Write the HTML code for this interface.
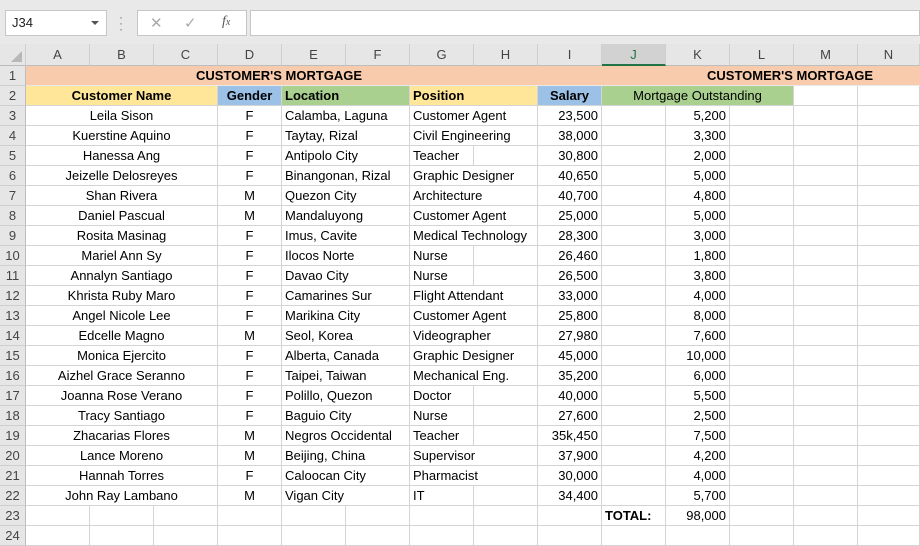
<!DOCTYPE html>
<html><head><meta charset="utf-8"><style>
*{box-sizing:border-box;margin:0;padding:0}
body{width:920px;height:546px;overflow:hidden;background:#fff;font-family:"Liberation Sans",Arial,sans-serif;font-size:13px;color:#000;position:relative}
.top{position:absolute;left:0;top:0;width:920px;height:44px;background:#e9e9e9}
.nb{position:absolute;left:5px;top:10px;width:102px;height:26px;background:#fff;border:1px solid #c6c6c6;font-size:13px;line-height:24px;padding-left:6px;color:#222}
.nb:after{content:"";position:absolute;right:7px;top:10px;border-left:4px solid transparent;border-right:4px solid transparent;border-top:4px solid #555}
.dots{position:absolute;left:119px;top:14px;color:#777;font-size:12px;line-height:6px;width:4px}
.fx{position:absolute;left:137px;top:10px;width:110px;height:26px;background:#fff;border:1px solid #c6c6c6;color:#aaa}
.fb{position:absolute;left:250px;top:10px;width:670px;height:26px;background:#fff;border:1px solid #c6c6c6}
.ch{position:absolute;top:44px;height:22px;background:#e6e6e6;border-right:1px solid #cfcfcf;border-bottom:1px solid #bdbdbd;text-align:center;line-height:22px;color:#444;font-size:13px}
.rh{position:absolute;left:0;width:26px;height:20px;background:#e6e6e6;border-right:1px solid #bdbdbd;border-bottom:1px solid #cfcfcf;text-align:center;line-height:20px;color:#444;font-size:13px}
.r{position:absolute;left:26px;width:894px;height:20px}
.c{position:absolute;top:0;height:20px;border-right:1px solid #d4d4d4;border-bottom:1px solid #d4d4d4;line-height:20px;padding:0 3px;white-space:nowrap;overflow:visible}
.A{left:0;width:192px;text-align:center}
.D{left:192px;width:64px;text-align:center}
.E{left:256px;width:128px}
.G{left:384px;width:128px}
.G1{left:384px;width:64px}
.H{left:448px;width:64px}
.I{left:512px;width:64px;text-align:right}
.J{left:576px;width:64px}
.K{left:640px;width:64px;text-align:right}
.L{left:704px;width:64px}
.M{left:768px;width:64px}
.N{left:832px;width:62px}
.b{font-weight:bold}
</style></head><body>
<div class="top">
<div class="nb">J34</div>
<div class="dots">·<br>·<br>·</div>
<div class="fx"><span style="position:absolute;left:12px;top:3px;font-size:15px">✕</span><span style="position:absolute;left:46px;top:3px;font-size:15px">✓</span><span style="position:absolute;left:84px;top:3px;font-style:italic;color:#555;font-family:'Liberation Serif',serif;font-size:14px">f<span style="font-size:10px">x</span></span></div>
<div class="fb"></div>
</div>
<div class="ch" style="left:0;width:26px;"><span style="position:absolute;right:3px;bottom:3px;border-left:11px solid transparent;border-bottom:11px solid #b8b8b8"></span></div>
<div class="ch" style="left:26px;width:64px">A</div>
<div class="ch" style="left:90px;width:64px">B</div>
<div class="ch" style="left:154px;width:64px">C</div>
<div class="ch" style="left:218px;width:64px">D</div>
<div class="ch" style="left:282px;width:64px">E</div>
<div class="ch" style="left:346px;width:64px">F</div>
<div class="ch" style="left:410px;width:64px">G</div>
<div class="ch" style="left:474px;width:64px">H</div>
<div class="ch" style="left:538px;width:64px">I</div>
<div class="ch" style="left:602px;width:64px;background:#d2d2d2;color:#217346;border-bottom:2px solid #217346">J</div>
<div class="ch" style="left:666px;width:64px">K</div>
<div class="ch" style="left:730px;width:64px">L</div>
<div class="ch" style="left:794px;width:64px">M</div>
<div class="ch" style="left:858px;width:62px">N</div>

<div class="rh" style="top:66px">1</div><div class="rh" style="top:86px">2</div><div class="rh" style="top:106px">3</div><div class="rh" style="top:126px">4</div><div class="rh" style="top:146px">5</div><div class="rh" style="top:166px">6</div><div class="rh" style="top:186px">7</div><div class="rh" style="top:206px">8</div><div class="rh" style="top:226px">9</div><div class="rh" style="top:246px">10</div><div class="rh" style="top:266px">11</div><div class="rh" style="top:286px">12</div><div class="rh" style="top:306px">13</div><div class="rh" style="top:326px">14</div><div class="rh" style="top:346px">15</div><div class="rh" style="top:366px">16</div><div class="rh" style="top:386px">17</div><div class="rh" style="top:406px">18</div><div class="rh" style="top:426px">19</div><div class="rh" style="top:446px">20</div><div class="rh" style="top:466px">21</div><div class="rh" style="top:486px">22</div><div class="rh" style="top:506px">23</div><div class="rh" style="top:526px">24</div>

<div class="r" style="top:66px"><div class="c b" style="left:0;width:894px;background:#f8cbad;border-right:none;border-bottom:1px solid #e9e9e9"><span style="position:absolute;left:170px">CUSTOMER'S MORTGAGE</span><span style="position:absolute;left:681px">CUSTOMER'S MORTGAGE</span></div></div>

<div class="r" style="top:86px">
<div class="c A b" style="background:#ffe699">Customer Name</div>
<div class="c D b" style="background:#9bc2e6">Gender</div>
<div class="c E b" style="background:#a9d08e">Location</div>
<div class="c G b" style="background:#ffe699">Position</div>
<div class="c I b" style="background:#9bc2e6;text-align:center">Salary</div>
<div class="c" style="left:576px;width:192px;background:#a9d08e;text-align:center">Mortgage Outstanding</div>
<div class="c M"></div><div class="c N"></div></div>

<div class="r" style="top:106px"><div class="c A">Leila Sison</div><div class="c D">F</div><div class="c E">Calamba, Laguna</div><div class="c G">Customer Agent</div><div class="c I">23,500</div><div class="c J"></div><div class="c K">5,200</div><div class="c L"></div><div class="c M"></div><div class="c N"></div></div>
<div class="r" style="top:126px"><div class="c A">Kuerstine Aquino</div><div class="c D">F</div><div class="c E">Taytay, Rizal</div><div class="c G">Civil Engineering</div><div class="c I">38,000</div><div class="c J"></div><div class="c K">3,300</div><div class="c L"></div><div class="c M"></div><div class="c N"></div></div>
<div class="r" style="top:146px"><div class="c A">Hanessa Ang</div><div class="c D">F</div><div class="c E">Antipolo City</div><div class="c G1">Teacher</div><div class="c H"></div><div class="c I">30,800</div><div class="c J"></div><div class="c K">2,000</div><div class="c L"></div><div class="c M"></div><div class="c N"></div></div>
<div class="r" style="top:166px"><div class="c A">Jeizelle Delosreyes</div><div class="c D">F</div><div class="c E">Binangonan, Rizal</div><div class="c G">Graphic Designer</div><div class="c I">40,650</div><div class="c J"></div><div class="c K">5,000</div><div class="c L"></div><div class="c M"></div><div class="c N"></div></div>
<div class="r" style="top:186px"><div class="c A">Shan Rivera</div><div class="c D">M</div><div class="c E">Quezon City</div><div class="c G">Architecture</div><div class="c I">40,700</div><div class="c J"></div><div class="c K">4,800</div><div class="c L"></div><div class="c M"></div><div class="c N"></div></div>
<div class="r" style="top:206px"><div class="c A">Daniel Pascual</div><div class="c D">M</div><div class="c E">Mandaluyong</div><div class="c G">Customer Agent</div><div class="c I">25,000</div><div class="c J"></div><div class="c K">5,000</div><div class="c L"></div><div class="c M"></div><div class="c N"></div></div>
<div class="r" style="top:226px"><div class="c A">Rosita Masinag</div><div class="c D">F</div><div class="c E">Imus, Cavite</div><div class="c G">Medical Technology</div><div class="c I">28,300</div><div class="c J"></div><div class="c K">3,000</div><div class="c L"></div><div class="c M"></div><div class="c N"></div></div>
<div class="r" style="top:246px"><div class="c A">Mariel Ann Sy</div><div class="c D">F</div><div class="c E">Ilocos Norte</div><div class="c G1">Nurse</div><div class="c H"></div><div class="c I">26,460</div><div class="c J"></div><div class="c K">1,800</div><div class="c L"></div><div class="c M"></div><div class="c N"></div></div>
<div class="r" style="top:266px"><div class="c A">Annalyn Santiago</div><div class="c D">F</div><div class="c E">Davao City</div><div class="c G1">Nurse</div><div class="c H"></div><div class="c I">26,500</div><div class="c J"></div><div class="c K">3,800</div><div class="c L"></div><div class="c M"></div><div class="c N"></div></div>
<div class="r" style="top:286px"><div class="c A">Khrista Ruby Maro</div><div class="c D">F</div><div class="c E">Camarines Sur</div><div class="c G">Flight Attendant</div><div class="c I">33,000</div><div class="c J"></div><div class="c K">4,000</div><div class="c L"></div><div class="c M"></div><div class="c N"></div></div>
<div class="r" style="top:306px"><div class="c A">Angel Nicole Lee</div><div class="c D">F</div><div class="c E">Marikina City</div><div class="c G">Customer Agent</div><div class="c I">25,800</div><div class="c J"></div><div class="c K">8,000</div><div class="c L"></div><div class="c M"></div><div class="c N"></div></div>
<div class="r" style="top:326px"><div class="c A">Edcelle Magno</div><div class="c D">M</div><div class="c E">Seol, Korea</div><div class="c G">Videographer</div><div class="c I">27,980</div><div class="c J"></div><div class="c K">7,600</div><div class="c L"></div><div class="c M"></div><div class="c N"></div></div>
<div class="r" style="top:346px"><div class="c A">Monica Ejercito</div><div class="c D">F</div><div class="c E">Alberta, Canada</div><div class="c G">Graphic Designer</div><div class="c I">45,000</div><div class="c J"></div><div class="c K">10,000</div><div class="c L"></div><div class="c M"></div><div class="c N"></div></div>
<div class="r" style="top:366px"><div class="c A">Aizhel Grace Seranno</div><div class="c D">F</div><div class="c E">Taipei, Taiwan</div><div class="c G">Mechanical Eng.</div><div class="c I">35,200</div><div class="c J"></div><div class="c K">6,000</div><div class="c L"></div><div class="c M"></div><div class="c N"></div></div>
<div class="r" style="top:386px"><div class="c A">Joanna Rose Verano</div><div class="c D">F</div><div class="c E">Polillo, Quezon</div><div class="c G1">Doctor</div><div class="c H"></div><div class="c I">40,000</div><div class="c J"></div><div class="c K">5,500</div><div class="c L"></div><div class="c M"></div><div class="c N"></div></div>
<div class="r" style="top:406px"><div class="c A">Tracy Santiago</div><div class="c D">F</div><div class="c E">Baguio City</div><div class="c G1">Nurse</div><div class="c H"></div><div class="c I">27,600</div><div class="c J"></div><div class="c K">2,500</div><div class="c L"></div><div class="c M"></div><div class="c N"></div></div>
<div class="r" style="top:426px"><div class="c A">Zhacarias Flores</div><div class="c D">M</div><div class="c E">Negros Occidental</div><div class="c G1">Teacher</div><div class="c H"></div><div class="c I">35k,450</div><div class="c J"></div><div class="c K">7,500</div><div class="c L"></div><div class="c M"></div><div class="c N"></div></div>
<div class="r" style="top:446px"><div class="c A">Lance Moreno</div><div class="c D">M</div><div class="c E">Beijing, China</div><div class="c G">Supervisor</div><div class="c I">37,900</div><div class="c J"></div><div class="c K">4,200</div><div class="c L"></div><div class="c M"></div><div class="c N"></div></div>
<div class="r" style="top:466px"><div class="c A">Hannah Torres</div><div class="c D">F</div><div class="c E">Caloocan City</div><div class="c G">Pharmacist</div><div class="c I">30,000</div><div class="c J"></div><div class="c K">4,000</div><div class="c L"></div><div class="c M"></div><div class="c N"></div></div>
<div class="r" style="top:486px"><div class="c A">John Ray Lambano</div><div class="c D">M</div><div class="c E">Vigan City</div><div class="c G1">IT</div><div class="c H"></div><div class="c I">34,400</div><div class="c J"></div><div class="c K">5,700</div><div class="c L"></div><div class="c M"></div><div class="c N"></div></div>

<div class="r" style="top:506px"><div class="c" style="left:0;width:64px"></div><div class="c" style="left:64px;width:64px"></div><div class="c" style="left:128px;width:64px"></div><div class="c D"></div><div class="c" style="left:256px;width:64px"></div><div class="c" style="left:320px;width:64px"></div><div class="c G1"></div><div class="c H"></div><div class="c I"></div><div class="c J b">TOTAL:</div><div class="c K">98,000</div><div class="c L"></div><div class="c M"></div><div class="c N"></div></div>
<div class="r" style="top:526px"><div class="c" style="left:0;width:64px"></div><div class="c" style="left:64px;width:64px"></div><div class="c" style="left:128px;width:64px"></div><div class="c D"></div><div class="c" style="left:256px;width:64px"></div><div class="c" style="left:320px;width:64px"></div><div class="c G1"></div><div class="c H"></div><div class="c I"></div><div class="c J"></div><div class="c K"></div><div class="c L"></div><div class="c M"></div><div class="c N"></div></div>
</body></html>
